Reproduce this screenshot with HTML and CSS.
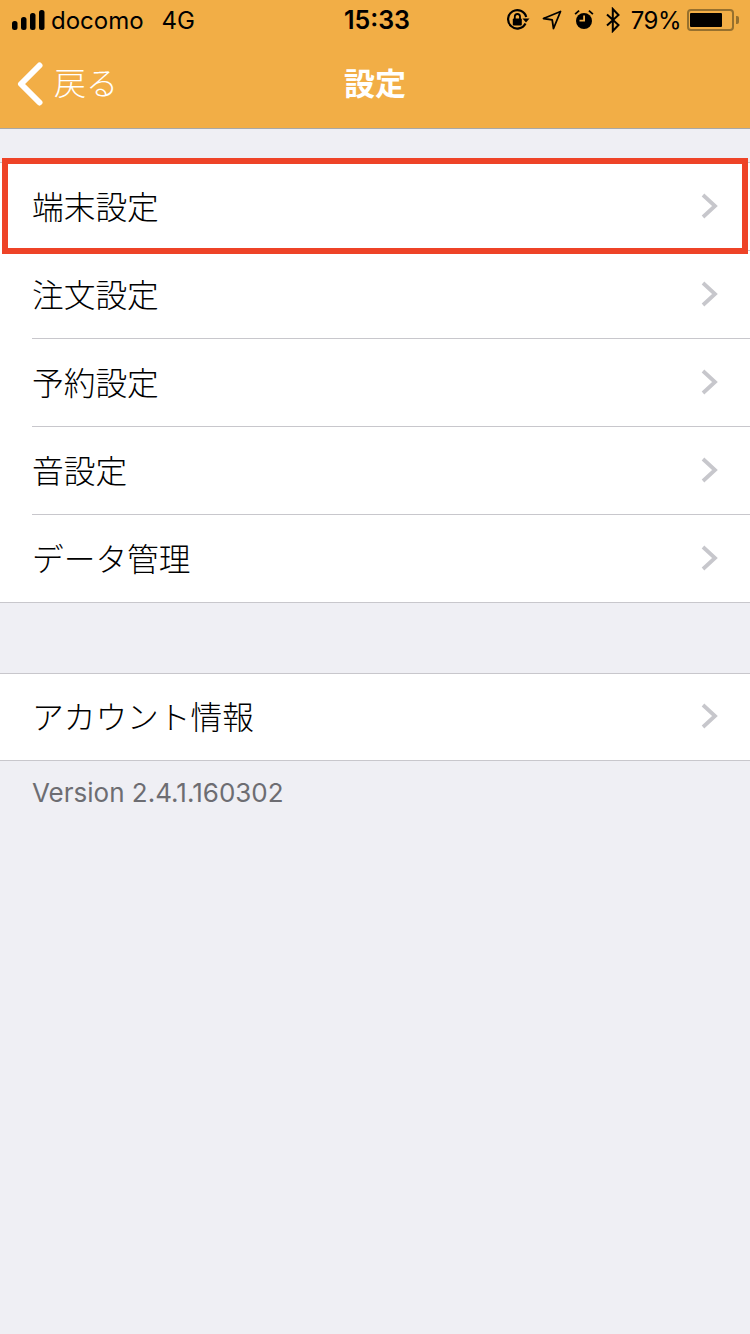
FILE: index.html
```html
<!DOCTYPE html>
<html lang="ja">
<head>
	<meta charset="UTF-8">
	<meta name="viewport" content="width=device-width, initial-scale=1.0">
	<title>設定</title>
	<link rel="stylesheet" href="styles.css">
</head>
<body>
	<header class="header">
		<div class="status">
			<div class="status-left">
				<svg class="signal" width="33" height="22" viewBox="0 0 33 22">
					<rect x="0" y="12" width="5.500" height="9" rx="2.500"/>
					<rect x="9" y="8" width="5.500" height="13" rx="2.500"/>
					<rect x="18" y="4" width="5.500" height="17" rx="2.500"/>
					<rect x="27" y="1" width="5.500" height="20" rx="2.500"/>
				</svg>
				<span class="carrier">docomo</span>
				<span class="network">4G</span>
			</div>
			<div class="clock">15:33</div>
			<div class="status-right">
				<svg class="ico-lock" width="24" height="24" viewBox="0 0 24 24" fill="none">
					<path d="M19.500 15.500A9.200 9.200 0 1 1 20.200 9" stroke="#000" stroke-width="2.200"/>
					<path d="M16.500 10.500h7l-3.500 4z" fill="#000"/>
					<rect x="6.800" y="10.500" width="9" height="7" rx="1" fill="#000"/>
					<path d="M8.800 11V8.600a2.600 2.600 0 0 1 5.200 0V11" stroke="#000" stroke-width="1.800"/>
				</svg>
				<svg class="ico-loc" width="20" height="20" viewBox="0 0 20 20" fill="none">
					<path d="M1.500 8.500 18.500 1.500 11.500 18.500 10.200 9.800z" stroke="#000" stroke-width="1.800" stroke-linejoin="round"/>
				</svg>
				<svg class="ico-alarm" width="20" height="22" viewBox="0 0 20 22">
					<circle cx="10" cy="12" r="8"/>
					<path d="M9.200 6.500h1.800v6H5.500v-1.700h3.700z" fill="#f2ae46"/>
					<path d="M0.500 4.500 4.500 1l1.200 1.200-4 3.600zM19.500 4.500 15.500 1l-1.200 1.200 4 3.600z"/>
				</svg>
				<svg class="ico-bt" width="14" height="26" viewBox="0 0 14 26" fill="none">
					<path d="M1 7.500 12.500 18 6.800 24V2l5.700 6L1 18.500" stroke="#000" stroke-width="2"/>
				</svg>
				<span class="percent">79%</span>
				<div class="battery">
					<div class="battery-body"><div class="battery-level"></div></div>
					<div class="battery-cap"></div>
				</div>
			</div>
		</div>
		<nav class="nav">
			<div class="back">
				<svg width="28" height="44" viewBox="0 0 28 44" fill="none">
					<path d="M23.500 3.500 5 22l18.500 18.500" stroke="#fff" stroke-width="6" stroke-linecap="round" stroke-linejoin="round"/>
				</svg>
				<span>戻る</span>
			</div>
			<h1 class="title">設定</h1>
		</nav>
	</header>

	<main class="content">
		<ul class="group group-first">
			<li class="row">
				<span class="label">端末設定</span>
				<svg class="chev" width="18" height="26" viewBox="0 0 18 26" fill="none"><path d="M2 2l12 11L2 24" stroke="#c7c7cc" stroke-width="3.800"/></svg>
				<div class="mark"></div>
			</li>
			<li class="row">
				<span class="label">注文設定</span>
				<svg class="chev" width="18" height="26" viewBox="0 0 18 26" fill="none"><path d="M2 2l12 11L2 24" stroke="#c7c7cc" stroke-width="3.800"/></svg>
			</li>
			<li class="row">
				<span class="label">予約設定</span>
				<svg class="chev" width="18" height="26" viewBox="0 0 18 26" fill="none"><path d="M2 2l12 11L2 24" stroke="#c7c7cc" stroke-width="3.800"/></svg>
			</li>
			<li class="row">
				<span class="label">音設定</span>
				<svg class="chev" width="18" height="26" viewBox="0 0 18 26" fill="none"><path d="M2 2l12 11L2 24" stroke="#c7c7cc" stroke-width="3.800"/></svg>
			</li>
			<li class="row">
				<span class="label">データ管理</span>
				<svg class="chev" width="18" height="26" viewBox="0 0 18 26" fill="none"><path d="M2 2l12 11L2 24" stroke="#c7c7cc" stroke-width="3.800"/></svg>
			</li>
		</ul>
		<ul class="group group-second">
			<li class="row">
				<span class="label">アカウント情報</span>
				<svg class="chev" width="18" height="26" viewBox="0 0 18 26" fill="none"><path d="M2 2l12 11L2 24" stroke="#c7c7cc" stroke-width="3.800"/></svg>
			</li>
		</ul>
		<p class="version">Version 2.4.1.160302</p>
	</main>
</body>
</html>
```

FILE: styles.css
```css
* {
	margin: 0;
	padding: 0;
	box-sizing: border-box;
}

html, body {
	height: 100%;
}

body {
	font-family: Inter, "Liberation Sans", "Noto Sans CJK JP", sans-serif;
	background-color: #efeff4;
	color: #000;
	overflow: hidden;
}

.header {
	height: 129px;
	background-color: #f2ae46;
	border-bottom: 1px solid #a8a8a8;
}

.status {
	height: 40px;
	padding: 0 11px 0 12px;
	display: flex;
	align-items: center;
	justify-content: space-between;
	font-size: 24px;
	position: relative;
}

.status-left {
	display: flex;
	align-items: center;
}

.signal {
	margin-right: 6px;
}

.network {
	margin-left: 18px;
}

.clock {
	position: absolute;
	left: 0;
	right: 0;
	top: 5px;
	padding-left: 4px;
	text-align: center;
	font-size: 25px;
	font-weight: 600;
}

.status-right {
	display: flex;
	align-items: center;
}

.ico-lock {
	margin-right: 12px;
}

.ico-loc {
	margin-right: 12px;
}

.ico-alarm {
	margin-right: 12px;
}

.ico-bt {
	margin-right: 11px;
}

.percent {
	margin-right: 6px;
	letter-spacing: -0.5px;
}

.battery {
	display: flex;
	align-items: center;
}

.battery-body {
	width: 47px;
	height: 22px;
	border: 2px solid #96702e;
	border-radius: 4px;
	padding: 2px 1px;
}

.battery-level {
	width: 32px;
	height: 100%;
	background: #000;
	border-radius: 1px;
}

.battery-cap {
	width: 3px;
	height: 8px;
	margin-left: 2px;
	background: #96702e;
	border-radius: 0 2px 2px 0;
}

.nav {
	height: 88px;
	padding-bottom: 6px;
	display: flex;
	align-items: center;
	justify-content: center;
	position: relative;
	color: #fff;
}

.back {
	position: absolute;
	left: 16px;
	top: 22px;
	height: 44px;
	display: flex;
	align-items: center;
	font-size: 32px;
	font-weight: 300;
}

.back span {
	margin-left: 10px;
	line-height: 44px;
}

.title {
	font-size: 31px;
	font-weight: bold;
}

.group {
	list-style: none;
	background: #fff;
	border-top: 1px solid #c8c7cc;
	border-bottom: 1px solid #c8c7cc;
}

.group-first {
	margin-top: 33px;
}

.group-second {
	margin-top: 70px;
}

.group-second .row:last-child {
	height: 86px;
}

.row {
	height: 88px;
	margin-left: 32px;
	padding-right: 31px;
	display: flex;
	align-items: center;
	justify-content: space-between;
	font-size: 31.700px;
	font-weight: 300;
	border-bottom: 1px solid #c8c7cc;
	position: relative;
}

.row:last-child {
	height: 87px;
	border-bottom: none;
}

.label {
	margin-bottom: 4px;
}

.chev {
	margin-bottom: 2px;
}

.mark {
	position: absolute;
	left: -30px;
	right: 2px;
	top: -5px;
	bottom: -4px;
	border: 6px solid #ee4327;
}

.version {
	padding: 16px 32px 0;
	font-size: 26px;
	color: #6d6d72;
}
```
